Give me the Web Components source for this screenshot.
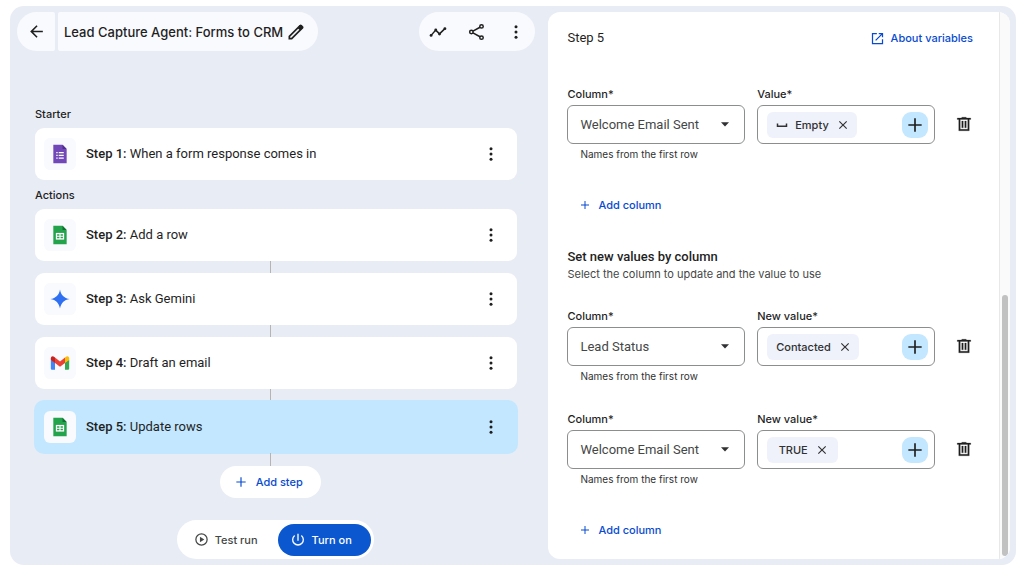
<!DOCTYPE html>
<html lang="en">
<head>
<meta charset="utf-8">
<meta name="viewport" content="width=device-width, initial-scale=1">
<title>Lead Capture Agent: Forms to CRM</title>
<style>
  :root {
    --text-font: Roboto, "Liberation Sans", sans-serif;
    --ui-font: Inter, "Liberation Sans", sans-serif;
    --ink: #1f1f1f;
    --blue: #0b57d0;
    --link: #084bd0;
    --sky: #c2e7ff;
    --canvas: #e8ecf5;
    --surface: #f9fafe;
  }
  body { margin: 0; background: #fff; color: var(--ink); font: 400 13px/20px var(--text-font); }
</style>
</head>
<body>
<flow-editor></flow-editor>

<script>
const ICONS = {
  back: '<path d="M7.8 13 13.4 18.6 12 20 4 12 12 4 13.4 5.4 7.8 11H20v2z"/>',
  edit: '<path d="M5 19h1.4l9.6-9.6L14.6 8 5 17.6zM3 21v-4.2L16.2 3.6q.3-.3.65-.43.35-.17.75-.17t.77.15q.37.15.63.45L20.4 5q.3.27.45.65.15.38.15.75 0 .4-.15.77-.15.36-.45.65L7.25 21z"/><path d="M15 5.500 18.500 9l1.800-1.800-3.500-3.500z"/>',
  activity: '<path d="M2.800 16.500 9 9.500 14 14.500 21.200 7.500" fill="none" stroke="currentColor" stroke-width="2"/><circle cx="2.800" cy="16.500" r="1.900"/><circle cx="9" cy="9.300" r="1.900"/><circle cx="14" cy="14.800" r="1.900"/><circle cx="21.200" cy="7.500" r="1.900"/>',
  share: '<g fill="none" stroke="currentColor" stroke-width="2"><circle cx="18" cy="4.500" r="2.300"/><circle cx="4.500" cy="12" r="2.300"/><circle cx="18" cy="19.500" r="2.300"/><path d="M6.600 10.900 16 5.700M6.600 13.100 16 18.300"/></g>',
  more: '<circle cx="12" cy="5" r="2"/><circle cx="12" cy="12" r="2"/><circle cx="12" cy="19" r="2"/>',
  plus: '<path d="M11 4h2v7h7v2h-7v7h-2v-7H4v-2h7z"/>',
  close: '<path d="M6.400 19 5 17.600 10.600 12 5 6.400 6.400 5 12 10.600 17.600 5 19 6.400 13.400 12 19 17.600 17.600 19 12 13.400z"/>',
  trash: '<path d="M5 21V6H3V4h6V3h6v1h6v2h-2v15zm2-2h10V6H7zm2-2h2V8H9zm4 0h2V8h-2z" stroke="currentColor" stroke-width=".3"/>',
  open: '<path d="M3 21V3h8v2H5v14h14v-6h2v8zm6.700-5.300-1.400-1.400L17.600 5H14V3h7v7h-2V6.400z"/>',
  play: '<path d="M9.500 16.500v-9l7 4.500z"/><circle cx="12" cy="12" r="9" fill="none" stroke="currentColor" stroke-width="2"/>',
  power: '<path d="M11 2.500h2V13h-2z"/><path d="M7 5.200A8 8 0 1 0 17 5.200" fill="none" stroke="currentColor" stroke-width="2"/>',
  space: '<path d="M3 9v5.500h18V9" fill="none" stroke="currentColor" stroke-width="3"/>',
  forms: '<path d="M4 1h11l5 5v17H4z" fill="#7248b9"/><path d="M15 1l5 5h-5z" fill="#4f2f8c"/><path d="M7.500 9.500h1.700v1.700H7.500zm3 0h6v1.700h-6zM7.500 12.800h1.700v1.700H7.500zm3 0h6v1.700h-6zM7.500 16.100h1.700v1.700H7.500zm3 0h6v1.700h-6z" fill="#fff"/>',
  sheets: '<path d="M4 1h11l5 5v17H4z" fill="#22a34c"/><path d="M15 1l5 5h-5z" fill="#11702f"/><path d="M7 9.500h10v8H7z" fill="#fff"/><path d="M8.500 11h2.800v1.800H8.500zm4.200 0h2.800v1.800h-2.800zM8.500 14.200h2.800V16H8.500zm4.200 0h2.800V16h-2.800z" fill="#22a34c"/>',
  gemini: '<path d="M12 .5C13 7 17 11 23.500 12 17 13 13 17 12 23.500 11 17 7 13 .5 12 7 11 11 7 12 .5z" fill="#2f6ff2"/>',
  gmail: '<path d="M1 8v10.500c0 1 .7 1.700 1.700 1.700H6V11z" fill="#4285f4"/><path d="M23 8v10.500c0 1-.7 1.700-1.700 1.700H18V11z" fill="#34a853"/><path d="M18 5.500V12l5-3.700V6.200c0-2.400-2.500-3.200-4.200-1.500z" fill="#fbbc04"/><path d="M6 12V5.500l6 4.600 6-4.600V12l-6 4.600z" fill="#ea4335"/><path d="M1 6.200v2.100L6 12V5.500l-.8-.8C3.500 3 1 3.800 1 6.200z" fill="#c5221f"/>'
};

const define = (name, markup, setup) => {
  const template = document.createElement('template');
  template.innerHTML = markup;
  customElements.define(name, class extends HTMLElement {
    constructor() {
      super();
      this.attachShadow({ mode: 'open' }).append(template.content.cloneNode(true));
    }
    connectedCallback() { if (setup) setup(this, this.shadowRoot); }
  });
};

const BUTTON = 'button{appearance:none;border:0;margin:0;padding:0;background:none;color:inherit;font:inherit;cursor:pointer}';

define('app-icon', `
<style>
  :host { display: block; flex: none; width: var(--icon-size, 18px); height: var(--icon-size, 18px); }
  svg { display: block; width: 100%; height: 100%; fill: currentColor; }
</style>
<svg viewBox="0 0 24 24" aria-hidden="true"></svg>`,
(host, root) => { root.querySelector('svg').innerHTML = ICONS[host.getAttribute('name')]; });

/* Label-less button around a single icon. */
define('icon-button', `
<style>
  ${BUTTON}
  :host { display: block; flex: none; }
  button { display: grid; place-items: center; width: var(--button-size, 38px); height: var(--button-size, 38px);
    background: var(--button-fill, none); border-radius: var(--button-radius, 19px); }
</style>
<button type="button"></button>`,
(host, root) => {
  const button = root.querySelector('button');
  const icon = document.createElement('app-icon');
  icon.setAttribute('name', host.getAttribute('icon'));
  button.setAttribute('aria-label', host.getAttribute('label'));
  button.replaceChildren(icon);
});

define('title-bar', `
<style>
  :host { display: flex; justify-content: space-between; padding: 0 13px 0 7px; }
  .name { display: flex; gap: 3px; }
  .back, .title, .tools { display: flex; align-items: center; height: 39px; background: var(--surface); }
  .back { border-radius: 20px 2px 2px 20px; --icon-size: 19px; }
  .title { padding: 0 9px 0 6px; border-radius: 2px 20px 20px 2px; --button-size: 26px; --icon-size: 20px; }
  h1 { margin: 0; font: 500 13px/20px var(--ui-font); }
  .tools { gap: 1px; border-radius: 20px; }
</style>
<div class="name">
  <div class="back"><icon-button icon="back" label="Back"></icon-button></div>
  <div class="title"><h1>Lead Capture Agent: Forms to CRM</h1><icon-button icon="edit" label="Rename"></icon-button></div>
</div>
<div class="tools">
  <icon-button icon="activity" label="Activity"></icon-button>
  <icon-button icon="share" label="Share"></icon-button>
  <icon-button icon="more" label="More options"></icon-button>
</div>`);

define('step-card', `
<style>
  :host { display: flex; align-items: center; box-sizing: border-box; height: 52px; padding: 0 8px 0 9px;
    background: #fff; border-radius: 9px; }
  :host([selected]) { background: var(--sky); box-shadow: 0 0 0 1px var(--sky); }
  .tile { display: grid; place-items: center; flex: none; width: 32px; height: 32px; margin-right: 10px;
    background: var(--surface); border-radius: 6px; --icon-size: 20px; }
  p { flex: 1; margin: 0; }
  b { font-weight: 500; }
  icon-button { --button-size: 36px; }
</style>
<div class="tile"><slot name="icon"></slot></div>
<p><b></b> <slot></slot></p>
<icon-button icon="more" label="Step options"></icon-button>`,
(host, root) => { root.querySelector('b').textContent = host.getAttribute('step') + ':'; });

define('step-list', `
<style>
  ${BUTTON}
  :host { display: block; padding: 55px 31px 0 25px; }
  h2 { margin: 0; padding: 0 0 6px; font: 500 11px/16px var(--ui-font); }
  step-card + h2 { padding-top: 7px; }
  .link { width: 1px; height: 12px; margin: 0 auto; border-right: 12px solid transparent; background: #b4b5b3; background-clip: padding-box; }
  .link.end { height: 13px; }
  .add { display: flex; justify-content: center; padding-right: 12px; }
  .add button { display: flex; align-items: center; gap: 8px; height: 32px; padding: 0 18px 0 14px;
    background: #fff; color: var(--link); border-radius: 16px; font: 500 11px/16px var(--ui-font); --icon-size: 14px; }
</style>
<h2>Starter</h2>
<step-card step="Step 1"><app-icon slot="icon" name="forms"></app-icon>When a form response comes in</step-card>
<h2>Actions</h2>
<step-card step="Step 2"><app-icon slot="icon" name="sheets"></app-icon>Add a row</step-card>
<div class="link"></div>
<step-card step="Step 3"><app-icon slot="icon" name="gemini"></app-icon>Ask Gemini</step-card>
<div class="link"></div>
<step-card step="Step 4"><app-icon slot="icon" name="gmail"></app-icon>Draft an email</step-card>
<div class="link"></div>
<step-card step="Step 5" selected><app-icon slot="icon" name="sheets"></app-icon>Update rows</step-card>
<div class="link end"></div>
<div class="add"><button type="button"><app-icon name="plus"></app-icon>Add step</button></div>`);

define('run-bar', `
<style>
  ${BUTTON}
  :host { display: flex; justify-content: center; padding: 22px 8px 0 0; }
  .pill { display: flex; align-items: center; height: 39px; padding: 0 3px 0 17px; background: #fff; border-radius: 20px; }
  button { display: flex; align-items: center; height: 32px; font: 500 11px/16px var(--ui-font); }
  .test { gap: 6px; padding-right: 20px; color: #444746; --icon-size: 15px; }
  .on { gap: 6px; padding: 0 19px 0 12px; background: var(--blue); color: #fff; border-radius: 16px; --icon-size: 16px; }
</style>
<div class="pill">
  <button type="button" class="test"><app-icon name="play"></app-icon>Test run</button>
  <button type="button" class="on"><app-icon name="power"></app-icon>Turn on</button>
</div>`);

/* Value token with its remove button. */
define('value-chip', `
<style>
  ${BUTTON}
  :host { display: flex; align-items: center; justify-content: center; gap: 7px; box-sizing: border-box; height: 26px;
    min-width: 71px; padding: 0 7px 0 9px; background: #eff2fa; color: #303133; border-radius: 6px;
    font: 500 11px/16px var(--ui-font); --icon-size: 14px; }
  ::slotted(app-icon) { --icon-size: 12px; }
  button { display: block; }
</style>
<slot></slot><button type="button" aria-label="Remove value"><app-icon name="close"></app-icon></button>`);

define('column-row', `
<style>
  :host { display: grid; grid-template-columns: 1fr 1fr 34px; column-gap: 12px; padding-right: 10px; }
  label, .label { display: block; margin-bottom: 3px; font: 500 11px/16px var(--ui-font); }
  .box { display: flex; align-items: center; box-sizing: border-box; width: 100%; height: 39px;
    border: 1px solid #8c8e8e; border-radius: 6px; }
  .pick { position: relative; }
  select { appearance: none; padding: 0 28px 0 12px; margin: 0; background: none; color: #444746;
    font: 400 13px/20px var(--text-font); text-overflow: ellipsis; }
  .pick svg { position: absolute; right: 16px; top: 17px; width: 8px; height: 5px; fill: #303133; pointer-events: none; }
  small { display: block; margin: 2px 0 0 13px; color: #303133; font: 400 10px/16px var(--ui-font); }
  .value { justify-content: space-between; padding: 0 6px 0 9px; }
  .value icon-button { --button-size: 26px; --button-radius: 9px; --button-fill: var(--sky); --icon-size: 20px; }
  .remove { margin-top: 21px; --button-size: 34px; }
</style>
<div>
  <label for="column">Column*</label>
  <div class="pick"><select id="column" class="box"></select><svg viewBox="0 0 8 5" aria-hidden="true"><path d="M0 .3h8L4 4.500z"/></svg></div>
  <small>Names from the first row</small>
</div>
<div role="group" aria-labelledby="value">
  <span class="label" id="value"></span>
  <div class="box value"><slot></slot><icon-button icon="plus" label="Insert variable"></icon-button></div>
</div>
<icon-button class="remove" icon="trash" label="Delete column"></icon-button>`,
(host, root) => {
  const names = ['Welcome Email Sent', 'Lead Status'];
  root.querySelector('select').replaceChildren(
    ...names.map(name => new Option(name, name, false, name === host.getAttribute('column'))));
  root.querySelector('#value').textContent = host.getAttribute('label');
});

define('add-column', `
<style>
  ${BUTTON}
  :host { display: block; padding: 27px 0 0 12px; }
  button { display: flex; align-items: center; gap: 7px; height: 32px; color: var(--link);
    font: 500 11px/16px var(--ui-font); --icon-size: 12px; }
</style>
<button type="button"><app-icon name="plus"></app-icon>Add column</button>`);

define('step-panel', `
<style>
  :host { display: grid; grid-template-columns: 1fr 11px; background: #fff; border-radius: 12px; overflow: hidden; }
  .content { min-width: 0; padding: 16px 8px 13px 19px; }
  header { display: flex; justify-content: space-between; align-items: center; padding: 0 18px 38px 0; }
  h2 { margin: 0; font: 400 13px/20px var(--text-font); }
  a { display: flex; align-items: center; gap: 6px; color: var(--link); text-decoration: none;
    font: 500 11px/20px var(--ui-font); --icon-size: 15px; }
  h3 { margin: 26px 0 0; font: 500 13px/19px var(--text-font); }
  p { margin: 0 0 26px; color: #444746; font: 400 11px/16px var(--ui-font); }
  column-row + column-row { margin-top: 27px; }
  .track { display: flex; flex-direction: column; justify-content: flex-end; align-items: center;
    padding-bottom: 3px; background: #fafafa; border-left: 1px solid #e8e8e8; }
  .thumb { width: 6px; height: 48%; background: #c1c1c1; border-radius: 3px; }
</style>
<div class="content">
  <header><h2>Step 5</h2><a href="#variables"><app-icon name="open"></app-icon>About variables</a></header>
  <column-row column="Welcome Email Sent" label="Value*"><value-chip><app-icon name="space"></app-icon>Empty</value-chip></column-row>
  <add-column></add-column>
  <h3>Set new values by column</h3>
  <p>Select the column to update and the value to use</p>
  <column-row column="Lead Status" label="New value*"><value-chip>Contacted</value-chip></column-row>
  <column-row column="Welcome Email Sent" label="New value*"><value-chip>TRUE</value-chip></column-row>
  <add-column></add-column>
</div>
<div class="track"><div class="thumb"></div></div>`);

define('flow-editor', `
<style>
  :host { display: grid; grid-template-columns: 7fr 6fr; box-sizing: border-box; min-height: calc(100vh - 14px);
    margin: 6px 8px 0 10px; padding: 6px 6px 6px 0; background: var(--canvas); border-radius: 14px; }
  main { min-width: 0; }
</style>
<main>
  <title-bar></title-bar>
  <step-list></step-list>
  <run-bar></run-bar>
</main>
<step-panel></step-panel>`);
</script>
</body>
</html>
